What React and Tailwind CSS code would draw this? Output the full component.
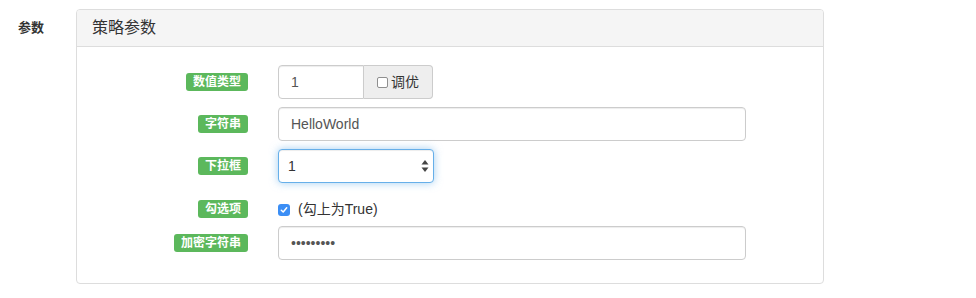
const FONT = { fontFamily: '"Liberation Sans", "Noto Sans CJK SC", sans-serif' }

function Badge({ children }) {
  return (
    <span className="inline-block bg-[#5cb85c] text-white font-bold text-[12px] leading-[12px] px-[7px] pt-[3px] pb-[3px] rounded-[3px]">
      {children}
    </span>
  )
}

function Row({ label, children, className = '' }) {
  return (
    <div className={'flex items-center ' + className}>
      <div className="w-[171px] flex justify-end">
        <Badge>{label}</Badge>
      </div>
      <div className="ml-[30px] flex items-center">{children}</div>
    </div>
  )
}

const inputCls =
  'h-[34px] border border-[#ccc] bg-white px-3 text-[14px] text-[#555] shadow-[inset_0_1px_1px_rgba(0,0,0,0.075)] outline-none'

export default function App() {
  return (
    <div className="w-[976px] h-[298px] bg-white text-[#333] flex pt-[9px]" style={FONT}>
      <div className="w-[76px] pl-[18px] pt-[9px] text-[13px] font-bold">参数</div>

      <div className="w-[748px] h-[275px] border border-[#ddd] rounded-[4px] overflow-hidden">
        <div className="h-[37px] bg-[#f5f5f5] border-b border-[#ddd] flex items-center px-[15px] text-[16px]">
          策略参数
        </div>

        <div className="pt-[18px] flex flex-col">
          <Row label="数值类型">
            <div className="flex">
              <input readOnly defaultValue="1" className={inputCls + ' w-[86px] rounded-l-[4px]'} />
              <div className="h-[34px] w-[69px] bg-[#eee] border border-l-0 border-[#ccc] rounded-r-[4px] flex items-center justify-center gap-[3px] text-[14px]">
                <span className="w-[11px] h-[11px] border border-[#8f8f8f] rounded-[2px] bg-white" />
                调优
              </div>
            </div>
          </Row>

          <Row label="字符串" className="mt-[8px]">
            <input readOnly defaultValue="HelloWorld" className={inputCls + ' w-[468px] rounded-[4px]'} />
          </Row>

          <Row label="下拉框" className="mt-[8px]">
            <div className="relative">
              <select
                defaultValue="1"
                className="appearance-none h-[34px] w-[156px] border border-[#66afe9] rounded-[4px] bg-white pl-[9px] text-[14px] text-[#333] outline-none shadow-[inset_0_1px_1px_rgba(0,0,0,0.075),0_0_8px_rgba(102,175,233,0.6)]"
              >
                <option value="1">1</option>
                <option value="2">2</option>
              </select>
              <svg className="absolute right-[5px] top-[10px]" width="8" height="14" viewBox="0 0 8 14">
                <path d="M4 1 L7.5 5.5 H0.5 Z" fill="#444" />
                <path d="M4 13 L7.5 8.5 H0.5 Z" fill="#444" />
              </svg>
            </div>
          </Row>

          <Row label="勾选项" className="h-[35px] mt-[8px]">
            <span className="w-[12px] h-[12px] rounded-[3px] bg-[#3b8ef5] flex items-center justify-center mt-[2px]">
              <svg width="8" height="8" viewBox="0 0 8 8">
                <path d="M1.3 4.2 L3.2 6 L6.7 1.8" fill="none" stroke="white" strokeWidth="1.5" strokeLinecap="round" strokeLinejoin="round" />
              </svg>
            </span>
            <span className="ml-[8px] text-[14px] mt-[2px]">(勾上为True)</span>
          </Row>

          <Row label="加密字符串">
            <input readOnly type="password" defaultValue="123456789" className={inputCls + ' w-[468px] rounded-[4px]'} />
          </Row>
        </div>
      </div>
    </div>
  )
}
